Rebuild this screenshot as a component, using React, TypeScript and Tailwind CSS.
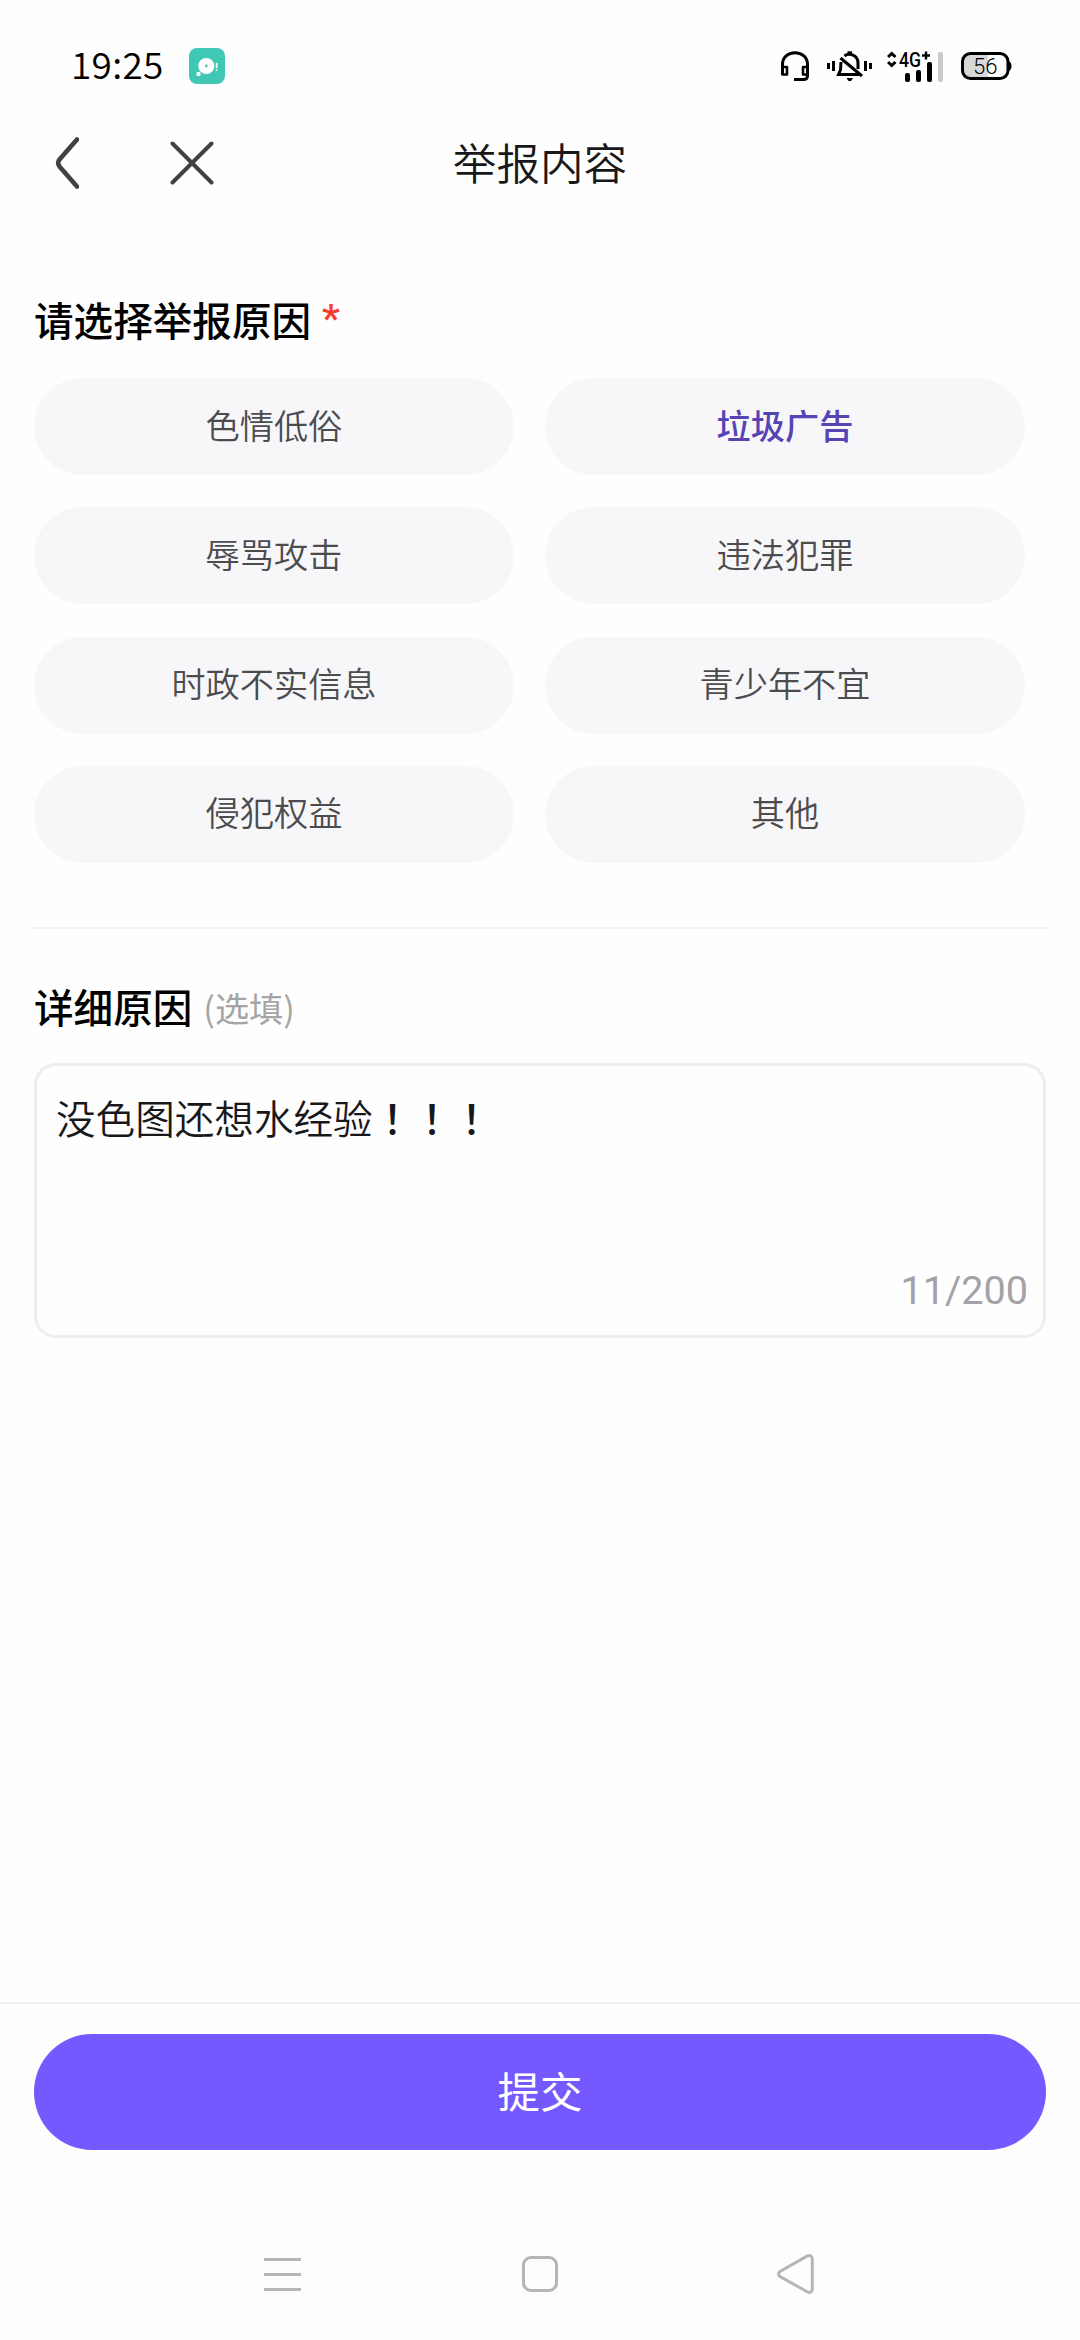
import { useState } from "react";

const reasons = [
  "色情低俗",
  "垃圾广告",
  "辱骂攻击",
  "违法犯罪",
  "时政不实信息",
  "青少年不宜",
  "侵犯权益",
  "其他",
];

function StatusBar() {
  return (
    <div className="flex h-[132px] items-center pr-[68px] pl-[71px]">
      <span className="w-[118px] pb-[5px] text-[37px] leading-none font-[350] tracking-[0.3px] whitespace-nowrap text-black">19:25</span>
      <svg className="block h-9 w-9" viewBox="0 0 36 36">
        <rect width="36" height="36" rx="8" fill="#40c8b5" />
        <circle cx="17.3" cy="18" r="8" fill="#fff" />
        <circle cx="9.5" cy="26" r="2.2" fill="#fff" />
        <circle cx="17.3" cy="18" r="1.4" fill="#40c8b5" />
        <path d="M27.6 15v5M27.6 21.5v1.6" stroke="#fff" strokeWidth="1.7" />
      </svg>
      <div className="ml-auto flex items-center">
        <svg className="block h-[30px] w-7" viewBox="0 0 28 30" fill="none" stroke="#000" strokeWidth="3">
          <path d="M1.5 24V13.5C1.5 6.5 7 1.7 14 1.7S26.5 6.5 26.5 13.5V24.5Q26.5 28.5 22.5 28.5H13" />
          <path d="M1.5 16H6V23.5H1.5ZM26.5 16H22V23.5H26.5Z" strokeWidth="2.6" strokeLinejoin="round" />
        </svg>
        <svg className="ml-[18px] block h-[30px] w-[45px]" viewBox="0 0 45 30" fill="none" stroke="#000">
          <path d="M1.5 12V18M6.5 10V20M38.5 10V20M43.5 12V18" strokeWidth="3" />
          <path d="M14 11L13.5 19L11.5 23.5H32M17.5 5C22 1.5 31 4 31 12V18" strokeWidth="3" />
          <path d="M13.5 7L35 25" strokeWidth="3" />
          <path d="M20.5 2H25" strokeWidth="3.5" />
          <path d="M19.5 27H26L24 30H21.5Z" fill="#000" stroke="none" />
        </svg>
        <svg className="ml-[15px] block h-8 w-14" viewBox="0 0 56 32">
          <path d="M1 7L4.7 3.5L8.5 7M1 12L4.7 15.5L8.5 12" fill="none" stroke="#000" strokeWidth="3" />
          <text x="12" y="16.5" fontSize="19.5" fontWeight="500" textLength="22" lengthAdjust="spacingAndGlyphs" fontFamily="Roboto, sans-serif">4G</text>
          <path d="M35 5.5H43M39 1.5V9.5" stroke="#000" strokeWidth="2.4" />
          <rect x="18" y="23" width="5" height="9" rx="2" />
          <rect x="29" y="20" width="5" height="12" rx="2" />
          <rect x="40" y="12" width="5" height="20" rx="2" />
          <rect x="51" y="2" width="5" height="30" rx="2" fill="#c9c9c9" />
        </svg>
        <svg className="ml-[18px] block h-7 w-[51px]" viewBox="0 0 51 28">
          <path d="M10 2H27V26H10Q2 26 2 18V10Q2 2 10 2Z" fill="#d8d8d8" />
          <rect x="1.5" y="1.5" width="45.5" height="25" rx="8" fill="none" stroke="#000" strokeWidth="3" />
          <path d="M47 8.5Q50.5 10 50.5 14T47 19.5Z" />
          <text x="12" y="21.5" fontSize="22" fontWeight="300" textLength="24.5" lengthAdjust="spacingAndGlyphs" fontFamily="Roboto, sans-serif">56</text>
        </svg>
      </div>
    </div>
  );
}

function TitleBar() {
  return (
    <header className="grid h-[62px] grid-cols-[1fr_auto_1fr] items-center">
      <div className="flex items-center pl-[55px]">
        <button aria-label="返回">
          <svg className="block h-[54px] w-6" viewBox="0 0 24 54" fill="none" stroke="#404143" strokeWidth="4.6" strokeLinecap="round">
            <path d="M22 3.5L4.5 23.5Q1.8 27 4.5 30.5L22 50.5" />
          </svg>
        </button>
        <button aria-label="关闭" className="ml-[91px]">
          <svg className="block h-[44px] w-[44px]" viewBox="0 0 44 44" stroke="#404143" strokeWidth="4" strokeLinecap="round">
            <path d="M2.5 2.5L41.5 41.5M41.5 2.5L2.5 41.5" />
          </svg>
        </button>
      </div>
      <h1 className="pb-[3px] text-[43.6px] leading-none font-[350] text-[#18181a]">举报内容</h1>
      <span />
    </header>
  );
}

function NavBar() {
  return (
    <nav className="flex h-[132px] justify-center bg-[#fdfdfd] pt-[46px] pr-[2px]">
      <svg className="block h-10 w-[37px]" viewBox="0 0 37 40" stroke="#b6b6b6" strokeWidth="3">
        <path d="M0 5.5H37M0 20.5H37M0 35.5H37" />
      </svg>
      <svg className="ml-[221px] block h-10 w-9" viewBox="0 0 36 40" fill="none" stroke="#b6b6b6" strokeWidth="3">
        <rect x="1.5" y="3.5" width="33" height="33" rx="7.5" />
      </svg>
      <svg className="ml-[219px] block h-10 w-[37px]" viewBox="0 0 37 40" fill="none" stroke="#b6b6b6" strokeWidth="3">
        <path d="M30 2.2Q34.8 0 35.3 5V35Q34.8 40 30 37.7L3 22.5Q0 20 3 17.5Z" />
      </svg>
    </nav>
  );
}

export default function App() {
  const [selected, setSelected] = useState("垃圾广告");
  const detail = "没色图还想水经验！！！";

  return (
    <div className="flex h-[2340px] w-[1080px] flex-col bg-[#fefefe] font-['Noto_Sans_CJK_SC',sans-serif]">
      <StatusBar />
      <TitleBar />
      <main className="flex flex-1 flex-col px-[34px] pt-[101px]">
        <h2 className="flex h-[52px] items-center pb-1 text-[39.6px] font-medium text-black">
          请选择举报原因
          <span className="ml-[11px] font-['Roboto'] font-semibold text-[#f83d30]">*</span>
        </h2>
        <div className="mt-[31px] grid grid-cols-[480px_480px] gap-x-[31px] gap-y-[32.3px]">
          {reasons.map((reason) => (
            <button
              key={reason}
              onClick={() => setSelected(reason)}
              className={
                reason === selected
                  ? "h-[97px] rounded-full bg-[#f7f7fa] pb-[5.6px] text-[34.2px] leading-none font-medium text-[#5644b5]"
                  : "h-[97px] rounded-full bg-[#f7f7fa] pb-[5.6px] text-[34.2px] leading-none font-[350] text-[#4c4c4e]"
              }
            >
              {reason}
            </button>
          ))}
        </div>
        <hr className="mt-[64px] border-t-2 border-[#f1f1f2]" />
        <h2 className="mt-[54px] flex h-[52px] items-center pb-[7px] text-[39.6px] font-medium text-black">
          详细原因
          <span className="mt-1 ml-[11px] text-[34.2px] font-normal text-[#a5a5a5]">(选填)</span>
        </h2>
        <div className="mt-[28px] flex h-[275px] flex-col rounded-[22px] border-3 border-[#eeeef0] pr-[15px] pb-[14px] pl-[19px]">
          <p
            role="textbox"
            className="mt-[22px] flex-1 text-[39.6px] leading-[58px] font-[350] text-[#18181a]"
          >
            {detail.split(/(！+)/).map((part, index) =>
              part.startsWith("！") ? (
                <span key={index} className="font-['Noto_Sans_CJK_TC'] font-medium">{part}</span>
              ) : (
                part
              ),
            )}
          </p>
          <span className="self-end font-['Roboto'] text-[39.6px] leading-[60px] text-[#a2a2a8]">{detail.length}/200</span>
        </div>
      </main>
      <footer className="h-[206px] border-t-2 border-[#f1f1f2] px-[34px] pt-[30px]">
        <button className="h-[116px] w-full rounded-full bg-[#7559ff] pb-[3px] text-[42.5px] leading-none text-white">提交</button>
      </footer>
      <NavBar />
    </div>
  );
}
